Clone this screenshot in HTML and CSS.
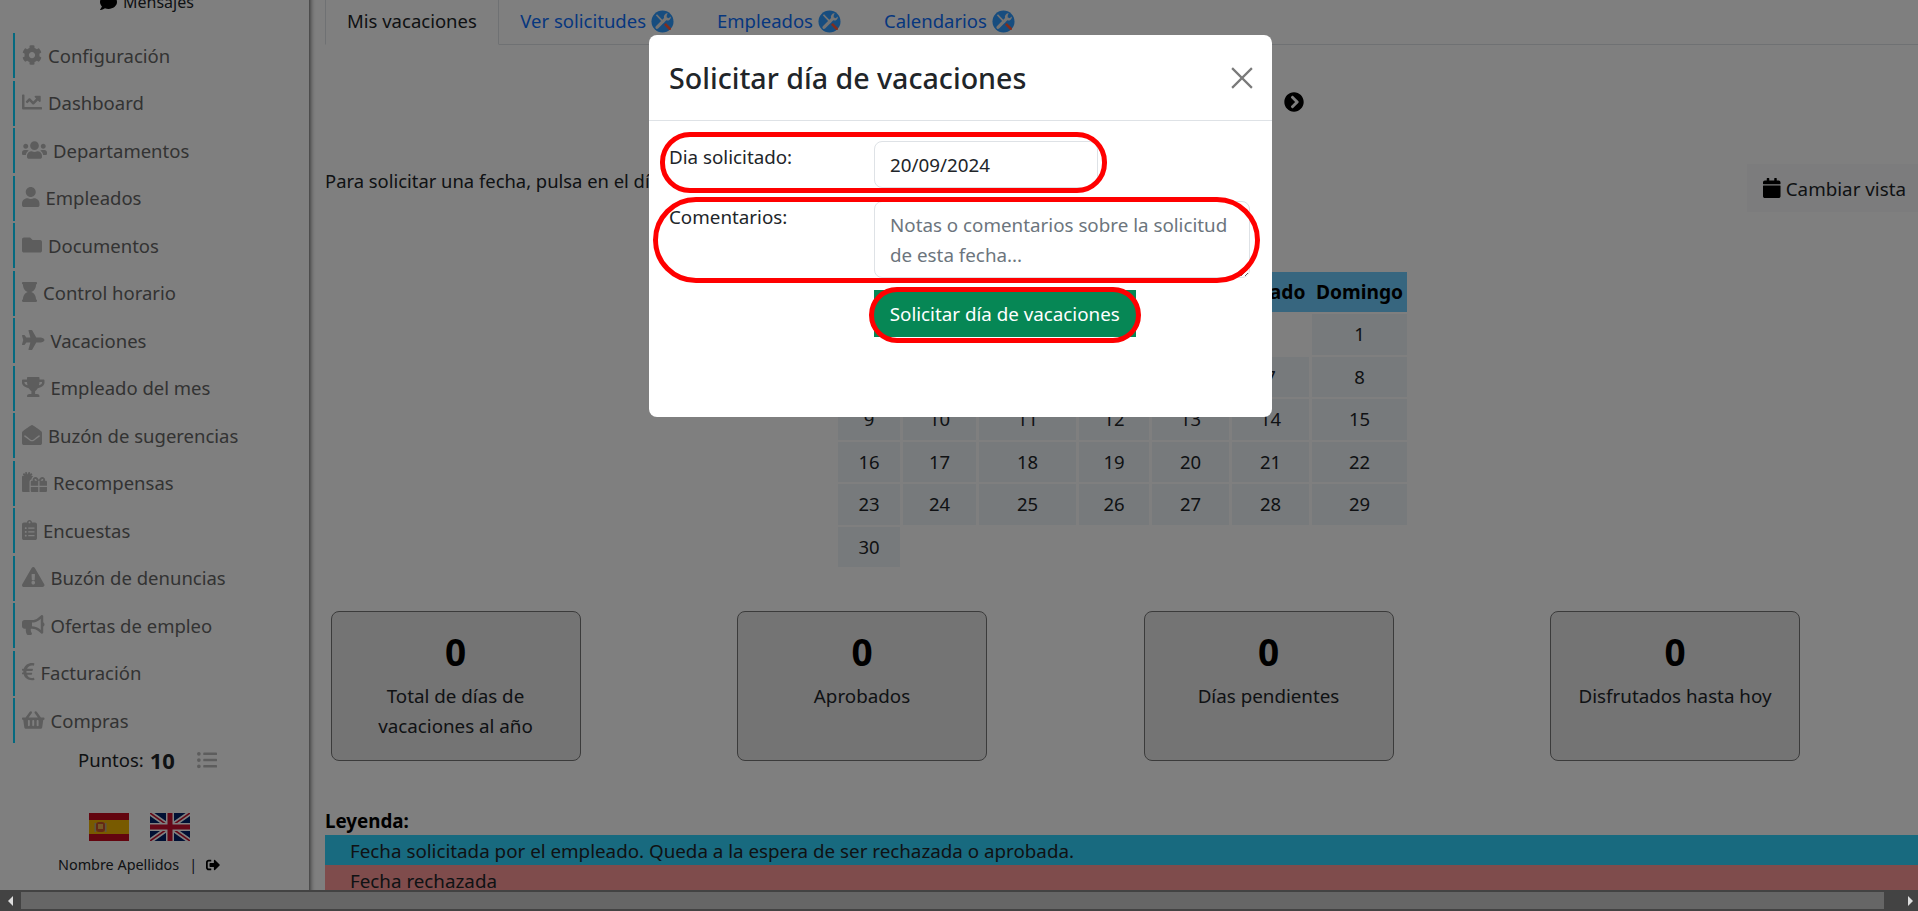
FILE: index.html
```html
<!DOCTYPE html>
<html lang="es">
<head>
<meta charset="utf-8">
<title>Mis vacaciones</title>
<link rel="stylesheet" href="styles.css">
</head>
<body>
<div class="page">
  <aside class="sidebar">
    <div class="msg"><svg class="ic-msg" viewBox="0 0 512 512"><path d="M256 32C114.6 32 0 125.1 0 240c0 49.6 21.4 95 57 130.7C44.5 421.1 2.7 466 2.2 466.5c-2.2 2.3-2.8 5.7-1.5 8.7S4.8 480 8 480c66.3 0 116-31.8 140.6-51.4 32.7 12.3 69 19.4 107.4 19.4 141.4 0 256-93.1 256-208S397.4 32 256 32z"/></svg><span>Mensajes</span></div>
    <nav class="nav">
      <a class="item"><svg viewBox="0 0 512 512"><path d="M487.4 315.7l-42.6-24.6c4.3-23.2 4.3-47 0-70.2l42.6-24.6c4.9-2.8 7.1-8.6 5.5-14-11.1-35.6-30-67.8-54.7-94.6-3.8-4.1-10-5.1-14.8-2.3L380.8 110c-17.9-15.4-38.5-27.3-60.8-35.1V25.8c0-5.6-3.9-10.5-9.4-11.7-36.7-8.2-74.3-7.8-109.2 0-5.5 1.2-9.4 6.1-9.4 11.7V75c-22.2 7.9-42.8 19.8-60.8 35.1L88.7 85.5c-4.9-2.8-11-1.9-14.8 2.3-24.7 26.7-43.6 58.9-54.7 94.6-1.7 5.4.6 11.2 5.5 14L67.3 221c-4.3 23.2-4.3 47 0 70.2l-42.6 24.6c-4.9 2.8-7.1 8.6-5.5 14 11.1 35.6 30 67.8 54.7 94.6 3.8 4.1 10 5.1 14.8 2.3l42.6-24.6c17.9 15.4 38.5 27.3 60.8 35.1v49.2c0 5.6 3.9 10.5 9.4 11.7 36.7 8.2 74.3 7.8 109.2 0 5.5-1.2 9.4-6.1 9.4-11.7v-49.2c22.2-7.9 42.8-19.8 60.8-35.1l42.6 24.6c4.9 2.8 11 1.9 14.8-2.3 24.7-26.7 43.6-58.9 54.7-94.6 1.5-5.5-.7-11.3-5.6-14.1zM256 336c-44.1 0-80-35.9-80-80s35.9-80 80-80 80 35.9 80 80-35.9 80-80 80z"/></svg><span>Configuración</span></a>
      <a class="item"><svg viewBox="0 0 512 512"><path d="M496 384H64V80c0-8.84-7.16-16-16-16H16C7.16 64 0 71.16 0 80v336c0 17.67 14.33 32 32 32h464c8.84 0 16-7.16 16-16v-32c0-8.84-7.16-16-16-16zM464 96H345.94c-21.38 0-32.09 25.85-16.97 40.97l32.4 32.4L288 242.75l-73.37-73.37c-12.5-12.5-32.76-12.5-45.25 0l-68.69 68.69c-6.25 6.25-6.25 16.38 0 22.63l22.62 22.62c6.25 6.25 16.38 6.25 22.63 0L192 237.25l73.37 73.37c12.5 12.5 32.76 12.5 45.25 0l96-96 32.4 32.4c15.12 15.12 40.97 4.41 40.97-16.97V112c.01-8.84-7.15-16-15.99-16z"/></svg><span>Dashboard</span></a>
      <a class="item"><svg viewBox="0 0 640 512"><path d="M96 224c35.3 0 64-28.7 64-64s-28.7-64-64-64-64 28.7-64 64 28.7 64 64 64zm448 0c35.3 0 64-28.7 64-64s-28.7-64-64-64-64 28.7-64 64 28.7 64 64 64zm32 32h-64c-17.6 0-33.5 7.1-45.1 18.6 40.3 22.1 68.9 62 75.1 109.4h66c17.7 0 32-14.3 32-32v-32c0-35.3-28.7-64-64-64zm-256 0c61.9 0 112-50.1 112-112S381.9 32 320 32 208 82.1 208 144s50.1 112 112 112zm76.8 32h-8.3c-20.8 10-43.9 16-68.5 16s-47.6-6-68.5-16h-8.3C179.6 288 128 339.6 128 403.2V432c0 26.5 21.5 48 48 48h288c26.5 0 48-21.5 48-48v-28.8c0-63.6-51.6-115.2-115.2-115.2zm-223.7-13.4C161.5 263.1 145.6 256 128 256H64c-35.3 0-64 28.7-64 64v32c0 17.7 14.3 32 32 32h65.9c6.3-47.4 34.9-87.3 75.2-109.4z"/></svg><span>Departamentos</span></a>
      <a class="item"><svg viewBox="0 0 448 512"><path d="M224 256c70.7 0 128-57.3 128-128S294.7 0 224 0 96 57.3 96 128s57.3 128 128 128zm89.6 32h-16.7c-22.2 10.2-46.9 16-72.9 16s-50.6-5.8-72.9-16h-16.7C60.2 288 0 348.2 0 422.4V464c0 26.5 21.5 48 48 48h352c26.5 0 48-21.5 48-48v-41.6c0-74.2-60.2-134.4-134.4-134.4z"/></svg><span>Empleados</span></a>
      <a class="item"><svg viewBox="0 0 512 512"><path d="M464 128H272l-64-64H48C21.49 64 0 85.49 0 112v288c0 26.51 21.49 48 48 48h416c26.51 0 48-21.49 48-48V176c0-26.51-21.49-48-48-48z"/></svg><span>Documentos</span></a>
      <a class="item"><svg viewBox="0 0 384 512"><path d="M360 64c13.255 0 24-10.745 24-24V24c0-13.255-10.745-24-24-24H24C10.745 0 0 10.745 0 24v16c0 13.255 10.745 24 24 24 0 90.965 51.016 167.734 120.842 192C75.016 280.266 24 357.035 24 448c-13.255 0-24 10.745-24 24v16c0 13.255 10.745 24 24 24h336c13.255 0 24-10.745 24-24v-16c0-13.255-10.745-24-24-24 0-90.965-51.016-167.734-120.842-192C308.984 231.734 360 154.965 360 64z"/></svg><span>Control horario</span></a>
      <a class="item"><svg viewBox="0 0 576 512"><path d="M480 192H365.71L260.61 8.06A16.014 16.014 0 0 0 246.71 0h-65.5c-10.63 0-18.3 10.17-15.38 20.39L214.86 192H112l-43.2-57.6c-3.02-4.03-7.77-6.4-12.8-6.4H16.01C5.6 128-2.04 137.78.49 147.88L32 256 .49 364.12C-2.04 374.22 5.6 384 16.01 384H56c5.04 0 9.78-2.37 12.8-6.4L112 320h102.86l-49.03 171.6c-2.92 10.22 4.75 20.4 15.38 20.4h65.5c5.74 0 11.04-3.08 13.89-8.06L365.71 320H480c35.35 0 96-28.65 96-64s-60.65-64-96-64z"/></svg><span>Vacaciones</span></a>
      <a class="item"><svg viewBox="0 0 576 512"><path d="M552 64H448V24c0-13.3-10.7-24-24-24H152c-13.3 0-24 10.7-24 24v40H24C10.7 64 0 74.7 0 88v56c0 35.7 22.5 72.4 61.9 100.7 31.5 22.7 69.8 37.1 110 41.7C203.3 338.5 240 360 240 360v72h-48c-35.3 0-64 20.7-64 56v12c0 6.6 5.4 12 12 12h296c6.6 0 12-5.4 12-12v-12c0-35.3-28.7-56-64-56h-48v-72s36.7-21.5 68.1-73.6c40.3-4.6 78.6-19 110-41.7 39.3-28.3 61.9-65 61.9-100.7V88c0-13.3-10.7-24-24-24zM99.3 192.8C74.9 175.2 64 155.6 64 144v-16h64.2c1 32.6 5.8 61.2 12.8 86.2-15.1-5.2-29.2-12.4-41.7-21.4zM512 144c0 16.1-17.7 36.1-35.3 48.8-12.5 9-26.7 16.2-41.8 21.4 7-25 11.8-53.6 12.8-86.2H512v16z"/></svg><span>Empleado del mes</span></a>
      <a class="item"><svg viewBox="0 0 512 512"><path d="M512 464c0 26.51-21.49 48-48 48H48c-26.51 0-48-21.49-48-48V200.724a48 48 0 0 1 18.387-37.776c24.913-19.529 45.501-35.365 164.2-121.511C199.412 29.17 232.797-.347 256 .003c23.198-.354 56.596 29.172 73.413 41.433 118.687 86.137 139.303 101.995 164.2 121.512A48 48 0 0 1 512 200.724V464zm-65.666-196.605c-2.563-3.728-7.7-4.595-11.339-1.907-22.845 16.873-55.462 40.705-105.582 77.079-16.825 12.266-50.21 41.781-73.413 41.43-23.211.344-56.559-29.143-73.413-41.43-50.114-36.37-82.734-60.204-105.582-77.079-3.639-2.688-8.776-1.821-11.339 1.907l-9.072 13.196a7.998 7.998 0 0 0 1.839 10.967c22.887 16.899 55.454 40.69 105.303 76.868 20.274 14.781 56.524 47.813 92.264 47.573 35.724.242 71.961-32.771 92.263-47.573 49.85-36.179 82.418-59.97 105.303-76.868a7.998 7.998 0 0 0 1.839-10.967l-9.071-13.196z"/></svg><span>Buzón de sugerencias</span></a>
      <a class="item"><svg viewBox="0 0 640 512"><path d="M240.6 194.1c1.9-30.8 17.3-61.2 44-79.8C279.4 103.5 268.7 96 256 96h-29.4l30.7-22c7.2-5.1 8.9-15.1 3.7-22.3l-9.3-13c-5.1-7.2-15.1-8.9-22.3-3.7l-32 22.9 11.5-30.6c3.1-8.3-1.1-17.5-9.4-20.6l-15-5.6c-8.3-3.1-17.5 1.1-20.6 9.4l-19.9 53-19.9-53.1C121 2.1 111.8-2.1 103.5 1l-15 5.6C80.2 9.7 76 19 79.2 27.2l11.5 30.6L58.6 35c-7.2-5.1-17.2-3.5-22.3 3.7l-9.3 13c-5.1 7.2-3.5 17.2 3.7 22.3l30.7 22H32c-17.7 0-32 14.3-32 32v352c0 17.7 14.3 32 32 32h168.9c-5.5-9.5-8.9-20.3-8.9-32V256c0-29.9 20.8-55 48.6-61.9zM224 480c0 17.7 14.3 32 32 32h160V384H224v96zm224 32h160c17.7 0 32-14.3 32-32v-96H448v128zm160-288h-20.4c2.6-7.6 4.4-15.5 4.4-23.8 0-35.5-27-72.2-72.1-72.2-48.1 0-75.9 47.7-87.9 75.3-12.1-27.6-39.9-75.3-87.9-75.3-45.1 0-72.1 36.7-72.1 72.2 0 8.3 1.7 16.2 4.4 23.8H256c-17.7 0-32 14.3-32 32v96h192V224h15.3l.7-.2.7.2H448v128h192v-96c0-17.7-14.3-32-32-32zm-272 0c-2.7-1.4-5.1-3-7.2-4.8-7.3-6.4-8.8-13.8-8.8-19 0-9.7 6.4-24.2 24.1-24.2 18.7 0 35.6 27.4 44.5 48H336zm199.2-4.8c-2.1 1.8-4.5 3.4-7.2 4.8h-52.6c8.8-20.3 25.8-48 44.5-48 17.7 0 24.1 14.5 24.1 24.2 0 5.2-1.5 12.6-8.8 19z"/></svg><span>Recompensas</span></a>
      <a class="item"><svg viewBox="0 0 384 512"><path d="M336 64h-80c0-35.3-28.7-64-64-64s-64 28.7-64 64H48C21.5 64 0 85.5 0 112v352c0 26.5 21.5 48 48 48h288c26.5 0 48-21.5 48-48V112c0-26.5-21.5-48-48-48zM96 424c-13.3 0-24-10.7-24-24s10.7-24 24-24 24 10.7 24 24-10.7 24-24 24zm0-96c-13.3 0-24-10.7-24-24s10.7-24 24-24 24 10.7 24 24-10.7 24-24 24zm0-96c-13.3 0-24-10.7-24-24s10.7-24 24-24 24 10.7 24 24-10.7 24-24 24zm96-192c13.3 0 24 10.7 24 24s-10.7 24-24 24-24-10.7-24-24 10.7-24 24-24zm128 368c0 4.4-3.6 8-8 8H168c-4.4 0-8-3.6-8-8v-16c0-4.4 3.6-8 8-8h144c4.4 0 8 3.6 8 8v16zm0-96c0 4.4-3.6 8-8 8H168c-4.4 0-8-3.6-8-8v-16c0-4.4 3.6-8 8-8h144c4.4 0 8 3.6 8 8v16zm0-96c0 4.4-3.6 8-8 8H168c-4.4 0-8-3.6-8-8v-16c0-4.4 3.6-8 8-8h144c4.4 0 8 3.6 8 8v16z"/></svg><span>Encuestas</span></a>
      <a class="item"><svg viewBox="0 0 576 512"><path d="M569.517 440.013C587.975 472.007 564.806 512 527.94 512H48.054c-36.937 0-59.999-40.055-41.577-71.987L246.423 23.985c18.467-32.009 64.72-31.951 83.154 0l239.94 416.028zM288 354c-25.405 0-46 20.595-46 46s20.595 46 46 46 46-20.595 46-46-20.595-46-46-46zm-43.673-165.346l7.418 136c.347 6.364 5.609 11.346 11.982 11.346h48.546c6.373 0 11.635-4.982 11.982-11.346l7.418-136c.375-6.874-5.098-12.654-11.982-12.654h-63.383c-6.884 0-12.356 5.78-11.981 12.654z"/></svg><span>Buzón de denuncias</span></a>
      <a class="item"><svg viewBox="0 0 576 512"><path d="M576 240c0-23.63-12.95-44.04-32-55.12V32.01C544 23.26 537.02 0 512 0c-7.12 0-14.19 2.38-19.98 7.02l-85.03 68.03C364.28 109.19 310.66 128 256 128H64c-35.35 0-64 28.65-64 64v96c0 35.35 28.65 64 64 64h33.7c-1.39 10.48-2.18 21.14-2.18 32 0 39.77 9.26 77.35 25.56 110.94 5.19 10.69 16.52 17.06 28.4 17.06h74.28c26.05 0 41.69-29.84 25.9-50.56-16.4-21.52-26.15-48.36-26.15-77.44 0-11.11 1.62-21.79 4.41-32H256c54.66 0 108.28 18.81 150.98 52.95l85.03 68.03a32.023 32.023 0 0 0 19.98 7.02c24.92 0 32-22.78 32-32V295.13C563.05 284.04 576 263.63 576 240zm-96 141.42l-33.05-26.44C392.95 311.78 325.12 288 256 288v-96c69.12 0 136.95-23.78 190.95-66.98L480 98.58v282.84z"/></svg><span>Ofertas de empleo</span></a>
      <a class="item"><svg viewBox="0 0 320 512"><path d="M310.7 413.8c-1.3-6.6-7.8-10.9-14.4-9.4-10.7 2.4-27.4 5.4-45.4 5.4-56.8 0-101.9-34.8-121.5-85.4h113.7a12 12 0 0 0 11.7-9.4l6.4-28.4c1.7-7.5-4-14.6-11.7-14.6H115.2c-1.2-14.3-1.4-28.3.1-42.2h146.6c5.7 0 10.6-4 11.8-9.6l6.5-31.6c1.5-7.4-4.2-14.6-11.8-14.6H130.7c19.8-48.7 64.6-83.2 124.5-83.2 14.8 0 29.1 1.9 38.7 3.6 6.1 1.1 12-2.7 13.6-8.6l10.6-38.7c1.8-6.4-2.3-13-8.8-14.5C297.1 28.3 276.6 25 254 25 152.7 25 71.9 84.8 45.2 172H12c-6.6 0-12 5.4-12 12v28c0 6.6 5.4 12 12 12h21.4c-.9 13.4-1 29.2-.1 42.2H12c-6.6 0-12 5.4-12 12v26.5c0 6.6 5.4 12 12 12h28.5c26.5 90.6 106 152.3 213.5 152.3 22.4 0 42.8-3.4 56.7-6.7 6.4-1.5 10.4-7.8 9.1-14.3z"/></svg><span>Facturación</span></a>
      <a class="item"><svg viewBox="0 0 576 512"><path d="M576 216v16c0 13.255-10.745 24-24 24h-8l-26.113 182.788C514.509 462.435 494.257 480 470.37 480H105.63c-23.887 0-44.139-17.565-47.518-41.212L32 256h-8c-13.255 0-24-10.745-24-24v-16c0-13.255 10.745-24 24-24h67.341l106.78-146.821c10.395-14.292 30.407-17.453 44.701-7.058 14.293 10.395 17.453 30.408 7.058 44.701L170.477 192h235.046L326.12 82.821c-10.395-14.292-7.234-34.306 7.059-44.701 14.291-10.395 34.306-7.235 44.701 7.058L484.659 192H552c13.255 0 24 10.745 24 24zM312 392V280c0-13.255-10.745-24-24-24s-24 10.745-24 24v112c0 13.255 10.745 24 24 24s24-10.745 24-24zm112 0V280c0-13.255-10.745-24-24-24s-24 10.745-24 24v112c0 13.255 10.745 24 24 24s24-10.745 24-24zm-224 0V280c0-13.255-10.745-24-24-24s-24 10.745-24 24v112c0 13.255 10.745 24 24 24s24-10.745 24-24z"/></svg><span>Compras</span></a>
    </nav>
    <div class="points"><span>Puntos:</span><b>10</b><svg viewBox="0 0 512 512"><path d="M48 48a48 48 0 1 0 48 48 48 48 0 0 0-48-48zm0 160a48 48 0 1 0 48 48 48 48 0 0 0-48-48zm0 160a48 48 0 1 0 48 48 48 48 0 0 0-48-48zm448 16H176a16 16 0 0 0-16 16v32a16 16 0 0 0 16 16h320a16 16 0 0 0 16-16v-32a16 16 0 0 0-16-16zm0-320H176a16 16 0 0 0-16 16v32a16 16 0 0 0 16 16h320a16 16 0 0 0 16-16V80a16 16 0 0 0-16-16zm0 160H176a16 16 0 0 0-16 16v32a16 16 0 0 0 16 16h320a16 16 0 0 0 16-16v-32a16 16 0 0 0-16-16z"/></svg></div>
    <div class="flags">
      <svg viewBox="0 0 40 28"><rect width="40" height="28" fill="#c60b1e"/><rect y="7" width="40" height="14" fill="#f0b400"/><rect x="7" y="9" width="9" height="10" rx="3" fill="#c8502a"/><rect x="9" y="11" width="5" height="5" fill="#e8b04a"/><rect x="5.500" y="10" width="1.500" height="9" fill="#b5a98a"/><rect x="16" y="10" width="1.500" height="9" fill="#b5a98a"/></svg>
      <svg viewBox="0 0 40 28"><rect width="40" height="28" fill="#012169"/><path d="M0 0L40 28M40 0L0 28" stroke="#fff" stroke-width="5"/><path d="M0 0L40 28M40 0L0 28" stroke="#c8102e" stroke-width="1.600"/><path d="M20 0V28M0 14H40" stroke="#fff" stroke-width="8"/><path d="M20 0V28M0 14H40" stroke="#c8102e" stroke-width="5"/></svg>
    </div>
    <div class="user"><span>Nombre Apellidos</span><span class="sep">|</span><svg viewBox="0 0 512 512"><path d="M497 273L329 441c-15 15-41 4.5-41-17v-96H152c-13.3 0-24-10.7-24-24v-96c0-13.3 10.7-24 24-24h136V88c0-21.4 25.9-32 41-17l168 168c9.3 9.4 9.3 24.6 0 34zM192 436v-40c0-6.6-5.4-12-12-12H96c-17.7 0-32-14.3-32-32V160c0-17.7 14.3-32 32-32h84c6.6 0 12-5.4 12-12V76c0-6.6-5.4-12-12-12H96c-53 0-96 43-96 96v192c0 53 43 96 96 96h84c6.6 0 12-5.4 12-12z"/></svg></div>
  </aside>

  <main class="main">
    <div class="tabs">
      <a class="tab active">Mis vacaciones</a>
      <a class="tab">Ver solicitudes<svg class="tool" viewBox="0 0 24 24"><circle cx="12" cy="12" r="11.500" fill="#2f9bff"/><path d="M17.500 3.500a3.800 3.800 0 0 0-3.900 4.900L5 17a1.700 1.700 0 0 0 2.400 2.400L16 10.800a3.800 3.800 0 0 0 4.800-4l-2.500 1.700-2-1 .2-2.300z" fill="#e8e8e8"/><path d="M5 5.500l1.300-1 7.700 8-1.300 1.300z" fill="#e8e8e8"/><path d="M13.500 15.500l2-2 5 5a1.400 1.400 0 0 1-2 2z" fill="#ff5a3c"/></svg></a>
      <a class="tab">Empleados<svg class="tool" viewBox="0 0 24 24"><circle cx="12" cy="12" r="11.500" fill="#2f9bff"/><path d="M17.500 3.500a3.800 3.800 0 0 0-3.900 4.900L5 17a1.700 1.700 0 0 0 2.400 2.400L16 10.800a3.800 3.800 0 0 0 4.800-4l-2.500 1.700-2-1 .2-2.300z" fill="#e8e8e8"/><path d="M5 5.500l1.300-1 7.700 8-1.300 1.300z" fill="#e8e8e8"/><path d="M13.500 15.500l2-2 5 5a1.400 1.400 0 0 1-2 2z" fill="#ff5a3c"/></svg></a>
      <a class="tab">Calendarios<svg class="tool" viewBox="0 0 24 24"><circle cx="12" cy="12" r="11.500" fill="#2f9bff"/><path d="M17.500 3.500a3.800 3.800 0 0 0-3.900 4.900L5 17a1.700 1.700 0 0 0 2.400 2.400L16 10.800a3.800 3.800 0 0 0 4.800-4l-2.500 1.700-2-1 .2-2.300z" fill="#e8e8e8"/><path d="M5 5.500l1.300-1 7.700 8-1.300 1.300z" fill="#e8e8e8"/><path d="M13.500 15.500l2-2 5 5a1.400 1.400 0 0 1-2 2z" fill="#ff5a3c"/></svg></a>
    </div>

    <div class="month">
      <svg viewBox="0 0 512 512"><path d="M256 504C119 504 8 393 8 256S119 8 256 8s248 111 248 248-111 248-248 248zM142.100 273l135.500 135.500c9.400 9.400 24.600 9.400 33.900 0l17-17c9.400-9.400 9.400-24.600 0-33.900L226.900 256l101.600-101.600c9.400-9.400 9.400-24.600 0-33.900l-17-17c-9.400-9.400-24.600-9.400-33.900 0L142.100 239c-9.400 9.400-9.400 24.600 0 34z"/></svg>
      <h2 class="month-name">Septiembre 2024</h2>
      <svg viewBox="0 0 512 512"><path d="M256 8c137 0 248 111 248 248S393 504 256 504 8 393 8 256 119 8 256 8zm113.900 231L234.400 103.500c-9.400-9.400-24.600-9.400-33.900 0l-17 17c-9.400 9.400-9.400 24.600 0 33.900L285.100 256 183.500 357.600c-9.400 9.400-9.400 24.600 0 33.900l17 17c9.400 9.400 24.600 9.400 33.900 0L369.900 273c9.400-9.400 9.400-24.600 0-34z"/></svg>
    </div>

    <div class="intro">
      <p>Para solicitar una fecha, pulsa en el día deseado del calendario.</p>
      <button class="view-btn" type="button"><svg viewBox="0 0 448 512"><path d="M12 192h424c6.600 0 12 5.400 12 12v260c0 26.500-21.500 48-48 48H48c-26.500 0-48-21.500-48-48V204c0-6.600 5.400-12 12-12zm436-44v-36c0-26.500-21.500-48-48-48h-48V12c0-6.600-5.400-12-12-12h-40c-6.600 0-12 5.400-12 12v52H160V12c0-6.600-5.400-12-12-12h-40c-6.600 0-12 5.400-12 12v52H48C21.500 64 0 85.500 0 112v36c0 6.600 5.400 12 12 12h424c6.600 0 12-5.400 12-12z"/></svg><span>Cambiar vista</span></button>
    </div>

    <table class="calendar">
      <colgroup><col class="c1"><col class="c2"><col class="c3"><col class="c4"><col class="c5"><col class="c6"><col class="c7"></colgroup>
      <thead><tr><th>Lunes</th><th>Martes</th><th>Miércoles</th><th>Jueves</th><th>Viernes</th><th>Sábado</th><th>Domingo</th></tr></thead>
      <tbody>
        <tr><td class="empty"></td><td class="empty"></td><td class="empty"></td><td class="empty"></td><td class="empty"></td><td class="empty"></td><td>1</td></tr>
        <tr><td>2</td><td>3</td><td>4</td><td>5</td><td>6</td><td>7</td><td>8</td></tr>
        <tr><td>9</td><td>10</td><td>11</td><td>12</td><td>13</td><td>14</td><td>15</td></tr>
        <tr><td>16</td><td>17</td><td>18</td><td>19</td><td>20</td><td>21</td><td>22</td></tr>
        <tr><td>23</td><td>24</td><td>25</td><td>26</td><td>27</td><td>28</td><td>29</td></tr>
        <tr><td>30</td><td class="empty"></td><td class="empty"></td><td class="empty"></td><td class="empty"></td><td class="empty"></td><td class="empty"></td></tr>
      </tbody>
    </table>

    <section class="stats">
      <div class="card"><div class="value">0</div><div class="label">Total de días de vacaciones al año</div></div>
      <div class="card"><div class="value">0</div><div class="label">Aprobados</div></div>
      <div class="card"><div class="value">0</div><div class="label">Días pendientes</div></div>
      <div class="card"><div class="value">0</div><div class="label">Disfrutados hasta hoy</div></div>
    </section>

    <section class="legend">
      <div class="legend-title">Leyenda:</div>
      <div class="legend-row info">Fecha solicitada por el empleado. Queda a la espera de ser rechazada o aprobada.</div>
      <div class="legend-row danger">Fecha rechazada</div>
    </section>
  </main>
</div>

<div class="backdrop"></div>

<div class="modal">
  <header class="modal-head">
    <h1>Solicitar día de vacaciones</h1>
    <svg class="close" viewBox="0 0 20 20"><path d="M1 1L19 19M19 1L1 19" stroke="#7a7a7a" stroke-width="2"/></svg>
  </header>
  <form class="modal-body">
    <label>Dia solicitado:</label>
    <input class="field date" type="text" value="20/09/2024">
    <label>Comentarios:</label>
    <textarea class="field notes" placeholder="Notas o comentarios sobre la solicitud de esta fecha..."></textarea>
    <span></span>
    <button class="submit" type="button">Solicitar día de vacaciones</button>
  </form>
  <span class="mark mark-date"></span>
  <span class="mark mark-notes"></span>
  <span class="mark mark-btn"></span>
</div>

<div class="scrollbar">
  <span class="arrow left"></span>
  <span class="thumb"></span>
  <span class="arrow right"></span>
</div>
</body>
</html>
```
FILE: styles.css
```css
* { box-sizing: border-box; }
html, body { margin: 0; height: 100%; overflow: hidden; background: #fff; }
body { font-family: "Noto Sans", "Open Sans", sans-serif; font-size: 18.8px; line-height: 30px; color: #212529; }
.page { display: flex; height: 911px; }

/* sidebar */
.sidebar { flex: none; width: 309px; margin-top: -13px; font-size: 18.5px; box-shadow: 1px 0 5px rgba(0,0,0,.7); }
.msg { display: flex; align-items: center; height: 30px; padding-left: 100px; gap: 6px; font-size: 16px; }
.ic-msg { height: 17px; flex: none; }
.nav { margin: 16px 0 0 13px; display: flex; flex-direction: column; gap: 2.5px; }
.item { display: flex; align-items: center; height: 45px; padding-left: 7px; gap: 6px; border-left: 2px solid #0ad2ff; color: #666; }
.item svg { height: 20px; flex: none; fill: #bbb; margin-top: -2px; }
.points { display: flex; align-items: center; height: 30px; margin-top: 2px; padding-left: 78px; }
.points b { font-size: 22px; margin-left: 6px; }
.points svg { height: 20px; margin-left: 22px; fill: #bbb; flex: none; }
.flags { display: flex; gap: 21px; margin-top: 38px; padding-left: 89px; }
.flags svg { width: 40px; height: 28px; flex: none; }
.user { display: flex; align-items: center; height: 20px; margin-top: 14px; padding-left: 58px; font-size: 14.4px; }
.sep { margin-left: 10px; }
.user svg { height: 14px; margin-left: 9px; flex: none; }

/* main */
.main { flex: none; width: 1595px; margin-left: 16px; }
.tabs { display: flex; height: 45px; border-bottom: 1px solid #dee2e6; font-size: 18.5px; }
.tab { display: flex; align-items: center; gap: 5px; height: 45px; padding: 0 20.5px 2px; color: #0d6efd; border: 1px solid transparent; border-top: 0; }
.tab.active { padding: 0 21px 2px; color: #212529; background: #fff; border-color: #dee2e6; border-bottom-color: #fff; }
.tool { width: 23px; height: 23px; flex: none; }

.month { display: flex; align-items: center; justify-content: center; gap: 16px; height: 40px; margin-top: 37px; }
.month svg { width: 20px; height: 20px; flex: none; }
.month-name { width: 290px; margin: 0; text-align: center; font-size: 26px; }

.intro { display: flex; justify-content: space-between; align-items: flex-start; margin-top: 42px; }
.intro p { margin: 2px 0 0; font-size: 18.4px; }
.view-btn { display: flex; align-items: center; gap: 5px; height: 48px; padding: 2px 14px 0 16px; border: 0; background: #f8f9fa; font: inherit; color: #212529; }
.view-btn svg { height: 20px; flex: none; margin-top: -2px; }

.calendar { margin: 58px auto 0; border-collapse: separate; border-spacing: 3px 2px; table-layout: fixed; text-align: center; }
.c1 { width: 62px; } .c2 { width: 73px; } .c3 { width: 97px; } .c4 { width: 70px; } .c5 { width: 77px; } .c6 { width: 77px; } .c7 { width: 95px; }
.calendar th { height: 40px; padding: 0; background: #6ecdff; box-shadow: 3px 0 0 #6ecdff; color: #000; font-size: 19.2px; }
.calendar th:last-child { box-shadow: none; }
.calendar td { height: 40.5px; padding: 0; background: #eef4f8; font-size: 18.5px; }
.calendar td.empty { background: none; }

.stats { display: grid; grid-template-columns: repeat(4, 406.5px); margin: 42px 0 0 5.5px; }
.card { width: 250px; height: 150px; padding: 10px 16px 0; background: #e8e8e8; border: 1px solid #777; border-radius: 8px; text-align: center; }
.value { font-size: 37px; font-weight: 700; line-height: 60px; color: #000; margin-bottom: -1px; }

.legend { margin-top: 47px; }
.legend-title { font-weight: 700; line-height: 26px; margin-bottom: 1px; color: #000; }
.legend-row { height: 30px; padding: 1px 0 0 25px; }
.info { background: #30d4ff; }
.danger { background: #ff9999; }

/* modal layer */
.backdrop { position: fixed; inset: 0; background: rgba(0,0,0,.5); }
.modal { position: fixed; left: 649px; top: 35px; width: 623px; height: 382px; background: #fff; border-radius: 8px; }
.modal-head { display: flex; align-items: center; justify-content: space-between; height: 86px; padding: 0 19px 0 20px; border-bottom: 1px solid #dee2e6; }
.modal-head h1 { margin: 0; font-size: 28.6px; font-weight: 500; line-height: 36px; }
.close { width: 22px; height: 22px; flex: none; }
.modal-body { display: grid; grid-template-columns: 204.5px 376.5px; align-items: start; padding: 20px 0 0 20px; }
.modal-body label { line-height: 30px; padding-top: 1px; }
.field { display: block; padding: 0 15.5px; border: 1px solid #dee2e6; border-radius: 8px; font: inherit; color: #212529; background: #fff; outline: 0; }
.field::placeholder { color: #6c757d; opacity: 1; }
.date { width: 224.5px; height: 47px; margin-bottom: 13px; padding-top: 1px; }
.notes { width: 376.5px; height: 77px; padding-top: 8px; }
.submit { width: 262.5px; height: 47px; margin-top: 12px; padding: 0; border: 0; background: #068755; color: #fff; font: inherit; }
.mark { position: absolute; border: 5px solid #f00; pointer-events: none; }
.mark-date { left: 11px; top: 97px; width: 447px; height: 61px; border-radius: 30px; }
.mark-notes { left: 4px; top: 162px; width: 607px; height: 86px; border-radius: 43px; }
.mark-btn { left: 220px; top: 252px; width: 272px; height: 56px; border-radius: 28px; }

/* window scrollbar */
.scrollbar { position: fixed; left: 0; right: 0; bottom: 0; height: 21px; display: flex; padding: 2px 0; background: #434343; }
.thumb { flex: 1; background: #666; }
.arrow { flex: none; position: relative; width: 21px; }
.arrow.right { width: 34px; }
.arrow::after { content: ""; position: absolute; top: 4px; border: 5px solid transparent; }
.arrow.left::after { left: 3px; border-right-color: #ddd; }
.arrow.right::after { right: 0; border-left-color: #ddd; }
```
